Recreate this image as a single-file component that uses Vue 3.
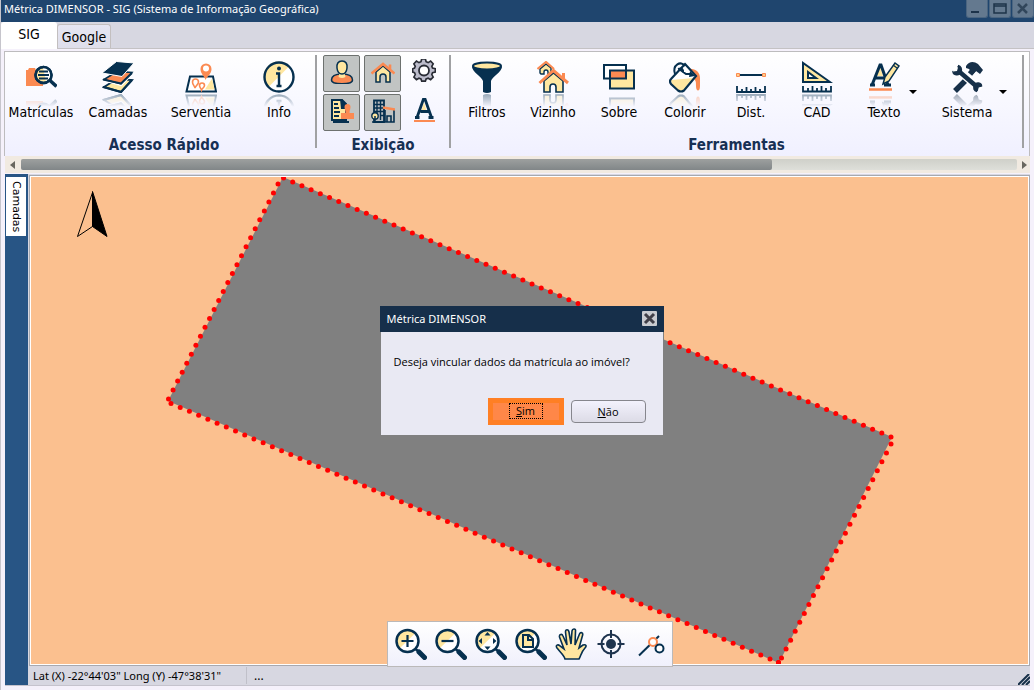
<script setup>
import { ref } from 'vue'

const navy = '#06304f'
const orange = '#fb8a52'
const cream = '#ffe7a0'

const icons = {
  records: `<path d="M1 9h2l1-2h6l1 2h7v16H1z" fill="${orange}"/>
    <circle cx="18.500" cy="14" r="8" fill="${cream}" stroke="${navy}" stroke-width="2.500"/>
    <path d="M18 6.500a7.500 7.500 0 0 1 7 10l-4 4z" fill="#fff"/>
    <circle cx="18.500" cy="14" r="8" fill="none" stroke="${navy}" stroke-width="2.500"/>
    <path d="M14 10.500h9M13 14h11M14 17.500h9" stroke="${navy}" stroke-width="2"/>
    <path d="M25 19.500l6.500 6" stroke="${navy}" stroke-width="3.500"/>`,
  layers: `<path d="M2 26l13-8 15 1-11 12z" fill="${cream}" stroke="${navy}" stroke-width="2"/>
    <path d="M2 18.500l13-8 15 1L19 23z" fill="${orange}" stroke="#fff" stroke-width="4"/>
    <path d="M2 18.500l13-8 15 1L19 23z" fill="${orange}" stroke="${navy}" stroke-width="1.500"/>
    <path d="M0 12L14.500 .5 32 2 20 15.500z" fill="${navy}" stroke="#fff" stroke-width="1"/>
    <path d="M1 18.500l18 4 11-10.500M1 26l18 5 11-12" fill="none" stroke="${navy}" stroke-width="2"/>`,
  office: `<path d="M5 15.500h23l3 15H1.500z" fill="#fff" stroke="${navy}" stroke-width="2"/>
    <path d="M20 28.500l7-11 2.500 11z" fill="${cream}"/>
    <path d="M20.500 19c-1-4-5-6-5-11a5.500 5.500 0 0 1 11 0c0 5-4 7-6 11z" fill="${orange}"/><circle cx="21" cy="7.500" r="3" fill="#fff"/>
    <path d="M10 27c-.5-2-2.500-3.500-2.500-6a3 3 0 0 1 6 0c0 2.500-3 4-3.500 6zM16.500 29c-.5-1.500-2-2.500-2-4.500a2.500 2.500 0 0 1 5 0c0 2-2.500 3-3 4.500z" fill="#fff" stroke="${orange}" stroke-width="1.600"/>`,
  info: `<circle cx="16" cy="16" r="14.500" fill="#fff"/><path d="M5 26.500A14.500 14.500 0 0 1 26.500 5z" fill="${cream}"/>
    <circle cx="16" cy="16" r="14.500" fill="none" stroke="${navy}" stroke-width="2.400"/>
    <circle cx="16" cy="7.500" r="2" fill="${navy}"/><path d="M13 12.500h3V24.500M13.500 25h5" fill="none" stroke="${navy}" stroke-width="2.400"/>`,
  person: `<path d="M1.500 20c0-5 6-6 10.500-6s10.500 1 10.500 6-21 5-21 0z" fill="${orange}" stroke="${navy}" stroke-width="1.500"/>
    <path d="M9.500 12.500h5l1 4.500q-3.500 2-7 0z" fill="${cream}"/>
    <path d="M12 1c4 0 5.500 3 5 7-.4 4-2.500 6-5 6s-4.600-2-5-6c-.5-4 1-7 5-7z" fill="${cream}" stroke="${navy}" stroke-width="1.500"/>`,
  house: `<path d="M5 12v10h4v-5a3 3 0 0 1 6 0v5h4V12l-7-6z" fill="${cream}" stroke="${navy}" stroke-width="1.500"/>
    <path d="M.5 13.500L12 4l11.500 9.500M19 9V4.500" fill="none" stroke="${orange}" stroke-width="2.600"/>`,
  gear: `<path d="M10 1h4l.8 3 2.200 1 2.700-1.600 2.800 2.900L21 9l.8 2 3 .7v3.600l-3 .7-.8 2 1.500 2.700-2.800 2.800-2.700-1.500-2.200.8-.8 2.400h-4l-.8-2.400-2.200-.8-2.700 1.500L1.500 20.700 3 18l-.8-2-2-.7v-3.600l2-.7.8-2-1.500-2.700 2.800-2.900L7 5l2.200-1z" transform="translate(.5 -1) scale(.92)" fill="#bcbccb" stroke="#292c35" stroke-width="1.800"/>
    <circle cx="12" cy="11.500" r="5" fill="#fff" stroke="#292c35" stroke-width="1.800"/>`,
  stamp: `<path d="M2 1h10l4 4v16H2z" fill="${cream}" stroke="${navy}" stroke-width="2"/><path d="M10 0h2l5 6v4h-6z" fill="${navy}"/>
    <path d="M4 5h4M4 9h5M4 13h6M4 17h5M3 23h16" stroke="${navy}" stroke-width="1.800"/>
    <path d="M14.500 8a3 3 0 0 1 6 0c0 2-1 3-1 6H24v6H11v-6h4.500c0-3-1-4-1-6z" fill="${orange}"/>`,
  building: `<path d="M3 1.500h10V23H3z" fill="#b9bdbf" stroke="${navy}" stroke-width="1.800"/>
    <path d="M6 2v13M9.500 2v19M3 5.500h10M3 9h10M3 12.500h10M10 16.500h3" stroke="${navy}" stroke-width="1.400"/>
    <path d="M14 11v12h9V11M16 23v-6h4v6M1 23h22" fill="none" stroke="${navy}" stroke-width="1.600"/><path d="M12 8.500l12 2" stroke="${orange}" stroke-width="2.400"/>
    <circle cx="4" cy="17" r="3.200" fill="${cream}" stroke="${navy}" stroke-width="1.400"/><path d="M4 17v7" stroke="${navy}" stroke-width="1.500"/>`,
  letter: `<path d="M12 4l2.500 9h-5z" fill="${cream}"/><path d="M3 19.500h4.500M16.500 19.500h5M5 19.500L11.500 1h1.500l6.500 18.500M8.500 13.500h8" fill="none" stroke="${navy}" stroke-width="2.800"/>
    <path d="M2 23h21" stroke="${orange}" stroke-width="2"/>`,
  funnel: `<path d="M1 5.500C1 11 11 16 12 20v11q4 2 8 0V20c1-4 11-9 11-14.500z" fill="${navy}"/>
    <ellipse cx="16" cy="5" rx="14" ry="3.500" fill="${cream}" stroke="${navy}" stroke-width="2"/>`,
  neighbor: `<path d="M3 12V8l6-5 5 4v6h-3v-2a2 2 0 0 0-4 0v2H4z" fill="${cream}" stroke="${navy}" stroke-width="1.400"/>
    <path d="M.5 8L9 1l8 7" fill="none" stroke="${orange}" stroke-width="2.200"/>
    <path d="M7 20v11h6v-5a3 3 0 0 1 6 0v5h7V20l-9.500-8z" fill="${cream}" stroke="${navy}" stroke-width="1.600"/>
    <path d="M2.500 22L16.500 9.500 31 22M26.500 18v-6" fill="none" stroke="${orange}" stroke-width="3"/>`,
  overlap: `<rect x="1" y="4" width="22" height="13" fill="#fff"/><rect x="7" y="9" width="24" height="18" fill="${cream}"/>
    <rect x="7" y="9" width="16" height="8" fill="${orange}"/><rect x="1" y="4" width="22" height="13.500" fill="none" stroke="${navy}" stroke-width="2"/>
    <rect x="7" y="9.500" width="24" height="18" fill="none" stroke="${navy}" stroke-width="2"/>`,
  bucket: `<path d="M19 8c7-1 12 3 12 9v8c0 6-4 6-4 0 0-4 0-5-2-7z" fill="${orange}"/>
    <path d="M16 3l11 12-12 14.500q-3 2-6 0L2 23q-2-3 0-5z" fill="#fff"/>
    <path d="M2 19l23-2-11 13q-2 1.500-5 0l-6-6z" fill="${cream}"/>
    <path d="M16 3l11 12-12 14.500q-3 2-6 0L2 23q-2-3 0-5z" fill="none" stroke="${navy}" stroke-width="2.200"/>
    <path d="M6 13C3 4 12-1 16 5M9 8q6-2 5 4M10 8l7 5h6" fill="none" stroke="${navy}" stroke-width="2"/><path d="M21 10l5 5-6 1z" fill="${navy}"/>`,
  distance: `<path d="M3 14h26" stroke="${navy}" stroke-width="2"/><path d="M1.500 12.500h3v3h-3zM27.500 12.500h3v3h-3z" fill="#ffd08b" stroke="${orange}"/>
    <path d="M2 25v6h28v-6M7 31v-3M11.500 31v-5M16 31v-3M20.500 31v-5M25 31v-3" fill="none" stroke="${navy}" stroke-width="1.800"/>`,
  cad: `<path d="M2 2v19h27z" fill="${cream}" stroke="${navy}" stroke-width="2"/><path d="M7 11v6h8z" fill="#fff" stroke="${navy}" stroke-width="2"/>
    <path d="M2 25v5.500h28V25M7 30v-3M11.500 30v-5M16 30v-3M20.500 30v-5M25 30v-3" fill="none" stroke="${navy}" stroke-width="1.800"/>`,
  text: `<path d="M12 5l3 10H8z" fill="${cream}"/><path d="M2 24h5M16 24h7M4 24L12 4h1l7 20M7 17h10" fill="none" stroke="${navy}" stroke-width="3"/>
    <path d="M15 23l2-7L27 2l4 3-10 15z" fill="${cream}" stroke="${navy}" stroke-width="1.500"/><path d="M25 4l4 3" stroke="${navy}" stroke-width="1.200"/>
    <path d="M1 28.500h23" stroke="${orange}" stroke-width="2.500"/>`,
  tools: `<path d="M4 30l11-11M19 13l5-6" stroke="#173049" stroke-width="5.500"/><path d="M15 5c3-5 8-5 12-2l5 6-3 4-4-3-3 3-4-5-3-1z" fill="#173049"/>
    <path d="M7 9.500L25 25" stroke="#fff" stroke-width="7"/><path d="M7 9.500L25 25" stroke="#173049" stroke-width="4.500"/>
    <path d="M7 5.500l-1 4-4 1C2 14 8 15.500 10 11c1-3 0-6-3-6.500M26 30l1-4 3.500-1c0-3.500-5.500-4-7-1-1.500 3-.5 6 2.500 6.500" fill="#173049" stroke="#173049" stroke-width="1.500"/>
    <path d="M3 4.500l4 2-1 3.500-4 .500zM27.500 30.500l1-4 3.500-.5z" fill="#fff"/>`,
}

const lens = (inner) => `<circle cx="12.500" cy="13" r="11" fill="#fff"/>
  <path d="M4.500 20.500A11 11 0 0 1 20.500 5z" fill="${cream}"/>
  <circle cx="12.500" cy="13" r="11" fill="none" stroke="${navy}" stroke-width="2.500"/>
  <path d="M20.500 21l3 2.500" stroke="${navy}" stroke-width="2.500"/><path d="M24 24l5.500 5.500" stroke="${navy}" stroke-width="5" stroke-linecap="round"/>${inner}`

const mapTools = [
  { name: 'Ampliar', art: lens(`<path d="M12.500 7v12M6.500 13h12" stroke="${navy}" stroke-width="2.200"/>`) },
  { name: 'Reduzir', art: lens(`<path d="M6.500 13h12" stroke="${navy}" stroke-width="2.200"/>`) },
  { name: 'Ver tudo', art: lens(`<path d="M9.500 7.500l3-3.500 3 3.500zM9.500 18.500l3 3.500 3-3.500zM7 10l-3.500 3L7 16zM18 10l3.500 3-3.500 3z" fill="${navy}"/>`) },
  { name: 'Ver folha', art: lens(`<path d="M8 7h6l4 4v8H8zM13 7v5h5" fill="${cream}" stroke="${navy}" stroke-width="2"/>`) },
  { name: 'Mover', art: `<path d="M10 31c-1-4-5-7-8-11-2-3 1-4 3-2l4 3L4.500 9C4 6 7 5.500 8 8l4 9-1.500-13c0-3 3-3 3.500 0l2 12 1-13c.5-3 4-2.500 3.500 0L20 17l4.500-11c1-2.500 4-1.500 3 1.500L24 20l4-3c3-1 4 1 2 3-4 4-4 8-6 11z" fill="${cream}" stroke="${navy}" stroke-width="1.600"/>` },
  { name: 'Centralizar', art: `<circle cx="16" cy="16" r="9.500" fill="none" stroke="#1e344e" stroke-width="2"/><circle cx="16" cy="16" r="5" fill="#1e344e"/><path d="M16 2v8M16 22v8M2.500 16h7M22.500 16h7" stroke="#1e344e" stroke-width="2"/>` },
  { name: 'Vértices', art: `<path d="M4 27.500L24 8" stroke="${navy}" stroke-width="2"/><path d="M19 15l5 4" stroke="${orange}" stroke-width="2"/><circle cx="18" cy="14" r="4" fill="#fff" stroke="${orange}" stroke-width="2"/><circle cx="24.500" cy="20.500" r="4" fill="#fff" stroke="${navy}" stroke-width="2"/>` },
]

const quick = [
  { label: 'Matrículas', icon: 'records', size: 'w72' },
  { label: 'Camadas', icon: 'layers', size: 'w82' },
  { label: 'Serventia', icon: 'office', size: 'w84' },
  { label: 'Info', icon: 'info', size: 'w72' },
]
const display = ref([
  { label: 'Pessoas', icon: 'person', on: true },
  { label: 'Imóveis', icon: 'house', on: true },
  { label: 'Configurar', icon: 'gear', on: false },
  { label: 'Certidões', icon: 'stamp', on: true },
  { label: 'Edificações', icon: 'building', on: true },
  { label: 'Rótulos', icon: 'letter', on: false },
])
const tools = [
  { label: 'Filtros', icon: 'funnel' },
  { label: 'Vizinho', icon: 'neighbor' },
  { label: 'Sobre', icon: 'overlap' },
  { label: 'Colorir', icon: 'bucket' },
  { label: 'Dist.', icon: 'distance' },
  { label: 'CAD', icon: 'cad' },
]
const menus = [
  { label: 'Texto', icon: 'text', size: 'w44' },
  { label: 'Sistema', icon: 'tools', size: 'w58' },
]

// Parcel boundary: each run is first vertex, last vertex and number of steps.
const runs = [
  [252.5, 1, 860, 260, 66],
  [860, 267, 750.5, 481, 24],
  [747.5, 485.5, 747.5, 485.5, 1],
  [739, 482, 140, 226.5, 65],
  [137.5, 222, 247, 7, 24],
]
const vertices = runs.flatMap(([x1, y1, x2, y2, n]) =>
  Array.from({ length: n + 1 }, (_, i) => ({ x: x1 + ((x2 - x1) * i) / n, y: y1 + ((y2 - y1) * i) / n })),
)

const open = ref(true)
</script>

<template>
  <div class="window">
    <header class="titlebar">
      <span>Métrica DIMENSOR - SIG (Sistema de Informação Geográfica)</span>
      <div class="winbtns">
        <button type="button" aria-label="Minimizar"><svg width="20" height="17"><path d="M4 12h8" stroke="#1d334a" stroke-width="2" /></svg></button>
        <button type="button" aria-label="Maximizar"><svg width="20" height="17"><path d="M4 4h12v9H4zM4 6h12" fill="none" stroke="#1d334a" stroke-width="1.500" /></svg></button>
        <button type="button" aria-label="Fechar"><svg width="20" height="17"><path d="M5 4l9 9M14 4l-9 9" stroke="#31465b" stroke-width="2.500" /></svg></button>
      </div>
    </header>

    <nav class="tabs">
      <button type="button" class="tab active">SIG</button>
      <button type="button" class="tab">Google</button>
    </nav>

    <section class="ribbon">
      <div class="group quick">
        <div class="tools">
          <button v-for="t in quick" :key="t.label" type="button" class="tool" :class="t.size">
            <span class="art"><svg width="32" height="32" v-html="icons[t.icon]" /></span>
            <span class="caption">{{ t.label }}</span>
          </button>
        </div>
        <h2>Acesso Rápido</h2>
      </div>
      <div class="group display">
        <div class="toggles">
          <button v-for="t in display" :key="t.label" type="button" class="toggle" :class="{ on: t.on }" :aria-label="t.label" :aria-pressed="t.on" @click="t.on = !t.on">
            <span class="art"><svg width="24" height="24" v-html="icons[t.icon]" /></span>
          </button>
        </div>
        <h2>Exibição</h2>
      </div>
      <div class="group wide">
        <div class="tools">
          <button v-for="t in tools" :key="t.label" type="button" class="tool w66">
            <span class="art"><svg width="32" height="32" v-html="icons[t.icon]" /></span>
            <span class="caption">{{ t.label }}</span>
          </button>
          <div v-for="t in menus" :key="t.label" class="menu">
            <button type="button" class="tool" :class="t.size">
              <span class="art"><svg width="32" height="32" v-html="icons[t.icon]" /></span>
              <span class="caption">{{ t.label }}</span>
            </button>
            <button type="button" class="caret" :aria-label="t.label + ': opções'"></button>
          </div>
        </div>
        <h2>Ferramentas</h2>
      </div>
    </section>

    <div class="scroll">
      <button type="button" aria-label="Rolar à esquerda"><svg width="16" height="17"><path d="M10 5v8L5 9z" fill="#69675f" /></svg></button>
      <div class="groove"><div class="thumb"></div></div>
      <button type="button" aria-label="Rolar à direita"><svg width="13" height="17"><path d="M5 5v8l5-4z" fill="#69675f" /></svg></button>
    </div>

    <div class="work">
      <aside class="side"><button type="button">Camadas</button></aside>
      <div class="main">
        <div class="map">
          <svg class="canvas">
            <path d="M252 0L861 260 748 486 137 224z" fill="#808080" />
            <circle v-for="(v, i) in vertices" :key="i" :cx="v.x" :cy="v.y" r="2.500" fill="#f00" />
            <path d="M61.500 15.500v34l-15 10z" fill="none" stroke="#000" />
            <path d="M61.500 14.500v35l14.500 10z" fill="#000" stroke="#000" stroke-width="1" />
          </svg>
          <div class="maptools">
            <button v-for="m in mapTools" :key="m.name" type="button" :aria-label="m.name"><svg width="32" height="32" v-html="m.art" /></button>
          </div>
        </div>
        <footer class="status">
          <span class="coords">Lat (X) -22°44'03" Long (Y) -47°38'31"</span>
          <span class="more">...</span>
          <svg class="grip" width="12" height="11"><path d="M0 11L11 0M4 11l8-8M8 11l4-4" stroke="#173049" stroke-width="2" /></svg>
        </footer>
      </div>
    </div>

    <div v-if="open" class="overlay">
      <div class="dialog" role="dialog" aria-labelledby="dlg-title">
        <div class="dlg-head">
          <span id="dlg-title">Métrica DIMENSOR</span>
          <button type="button" aria-label="Fechar" @click="open = false"><svg width="15" height="15"><path d="M3 3l9 9M12 3l-9 9" stroke="#403f48" stroke-width="3" /></svg></button>
        </div>
        <p>Deseja vincular dados da matrícula ao imóvel?</p>
        <div class="actions">
          <button type="button" class="yes" @click="open = false"><span><u>S</u>im</span></button>
          <button type="button" class="no" @click="open = false"><u>N</u>ão</button>
        </div>
      </div>
    </div>
  </div>
</template>

<style>
body { margin: 0; }
</style>

<style scoped>
* { box-sizing: border-box; }
button { appearance: none; margin: 0; padding: 0; border: 0; background: none; font: inherit; color: inherit; }
svg { display: block; }

.window {
  position: relative;
  display: flex;
  flex-direction: column;
  min-height: 100vh;
  overflow: hidden;
  background: #f5f1fb;
  border-left: 1px solid #c6c5cc;
  font-family: "Open Sans", "Noto Sans", sans-serif;
  font-size: 12px;
  color: #000;
}

.titlebar {
  display: flex;
  justify-content: space-between;
  height: 22px;
  margin-left: -1px;
  padding-left: 4px;
  background: #1f456e;
  color: #fff;
  font-family: "Noto Sans", "Open Sans", sans-serif;
  font-size: 11px;
  line-height: 18px;
}
.winbtns { display: flex; gap: 1px; }
.winbtns button { height: 18px; border: 1px solid #4b6580; border-top: 0; border-radius: 0 0 3px 3px; background: #64798f; }

.tabs {
  display: flex;
  align-items: flex-end;
  height: 27px;
  background: #d7d7e1;
  border-bottom: 1px solid #c4c2c4;
  font-family: "DejaVu Sans Condensed", "DejaVu Sans", sans-serif;
  font-size: 14px;
}
.tab { width: 54px; height: 24px; border: 1px solid #c3bfbf; border-bottom: 0; border-radius: 3px 3px 0 0; background: linear-gradient(#e6e6f3, #dedeea); }
.tab.active { width: 56px; height: 27px; margin-bottom: -1px; padding-bottom: 3px; border: 0; background: #fff; }

.ribbon {
  display: flex;
  height: 105px;
  margin: 2px 4px 0 3px;
  overflow: hidden;
  border: 1px solid #bdbcbe;
  border-bottom: 0;
  background: linear-gradient(#fff, #f0f0ff);
  font-family: "DejaVu Sans Condensed", "DejaVu Sans", sans-serif;
  font-size: 14px;
}
.group { position: relative; flex: none; padding-top: 9px; border-style: solid; border-width: 0 2px 0 0; border-image: linear-gradient(transparent 4px, #a0a1a3 4px, #a0a1a3 95px, transparent 95px) 1; }
.wide { flex: 0 0 573px; }
.quick h2 { padding-left: 8px; }
.display { width: 134px; padding-top: 3px; }
.tools { display: flex; height: 72px; }
.wide .tools { padding-left: 3px; }
.toggles { display: grid; grid-template-columns: repeat(3, 37px); gap: 2px 4px; height: 78px; padding-left: 6px; align-content: start; }
h2 { margin: 0; font-size: 15px; line-height: 24px; font-weight: 700; text-align: center; color: #173054; }
.tool { display: flex; flex-direction: column; align-items: center; height: 62px; }
.art { display: block; -webkit-box-reflect: below 1px linear-gradient(transparent 60%, rgba(0, 0, 0, 0.4)); }
.caption { position: relative; margin-top: 9px; line-height: 20px; white-space: nowrap; }
.w72 { width: 72px; }
.w82 { width: 82px; }
.w84 { width: 84px; }
.w66 { width: 66px; }
.w44 { width: 44px; }
.w58 { width: 58px; }
.toggle { display: flex; justify-content: center; width: 37px; height: 37px; padding-top: 4px; border: 1px solid transparent; border-radius: 2px; overflow: hidden; }
.toggle.on { border-color: #6d716f; background: #c1c4c3; }
.toggle:not(.on) { padding-top: 3px; }
.menu { display: flex; align-items: center; gap: 3px; height: 62px; margin-left: 12px; }
.menu + .menu { margin-left: 21px; }
.caret { width: 8px; height: 4px; background: #000; clip-path: polygon(0 0, 100% 0, 50% 100%); }

.scroll { display: flex; align-items: center; height: 17px; margin: 0 4px; background: #f1eae1; }
.groove { flex: 1; height: 11px; background: linear-gradient(#cfd0c9, #dedfda); border-radius: 2px; }
.thumb { width: 75.4%; height: 11px; border-radius: 2px; background: linear-gradient(#9da09f, #818688); }

.work { display: flex; flex: 1; min-height: 300px; margin: 1px 4px 4px; border-bottom: 1px solid #c5c3cd; }
.side { width: 23px; padding: 3px 1px; background: #285585; }
.side button { display: block; width: 20px; height: 59px; background: #fff; writing-mode: vertical-rl; font-family: "DejaVu Sans", sans-serif; font-size: 11px; line-height: 20px; }
.main { display: flex; flex: 1; flex-direction: column; min-width: 0; padding: 1px 0 0 1px; background: #d7d7e1; }
.map { position: relative; flex: 1; border: 1px solid #a7a9b0; padding: 1px; background: #fff; }
.canvas { width: 100%; height: 100%; position: absolute; inset: 0; border: 1px solid #fff; background: #fbc08f; }
.maptools {
  position: absolute;
  left: 50%;
  bottom: -2px;
  transform: translateX(-50%);
  display: flex;
  gap: 8px;
  padding: 6px 5px 6px 7px;
  border: 1px solid #bbb9b9;
  background: linear-gradient(#fff, #f0f0fc);
}
.status { display: flex; align-items: center; height: 19px; background: #d7d7e1; font-family: "Noto Sans", "Open Sans", sans-serif; }
.coords { width: 218px; padding-left: 4px; border-right: 1px solid #c0c0c9; line-height: 17px; white-space: nowrap; font-size: 11px; }
.more { padding-left: 7px; }
.grip { margin-left: auto; align-self: flex-end; }

.overlay { position: absolute; inset: 51px 0 0 8px; display: grid; place-items: center; pointer-events: none; }
.dialog { width: 284px; background: #e9e9f3; border: 1px solid #808080; border-top: 0; pointer-events: auto; font-size: 11px; }
.dlg-head { display: flex; align-items: center; justify-content: space-between; height: 26px; margin: 0 -1px; padding: 0 7px; background: #162f4a; color: #fff; font-family: "Noto Sans", "Open Sans", sans-serif; }
.dlg-head button { background: #c9cbd0; border-radius: 1px; }
.dialog p { margin: 21px 13px 27px; line-height: 18px; white-space: nowrap; }
.actions { display: flex; align-items: center; justify-content: flex-end; gap: 7px; padding: 0 17px 10px; }
.yes { width: 76px; height: 27px; border: 5px solid #ff7f24; background: #ff8748; }
.yes span { display: block; width: 34px; margin: 0 auto; border: 1px dotted #000; line-height: 14px; }
.no { width: 75px; height: 23px; border: 1px solid #86868d; border-radius: 4px; background: linear-gradient(#f3f2fd, #dcdbe6); }
</style>
